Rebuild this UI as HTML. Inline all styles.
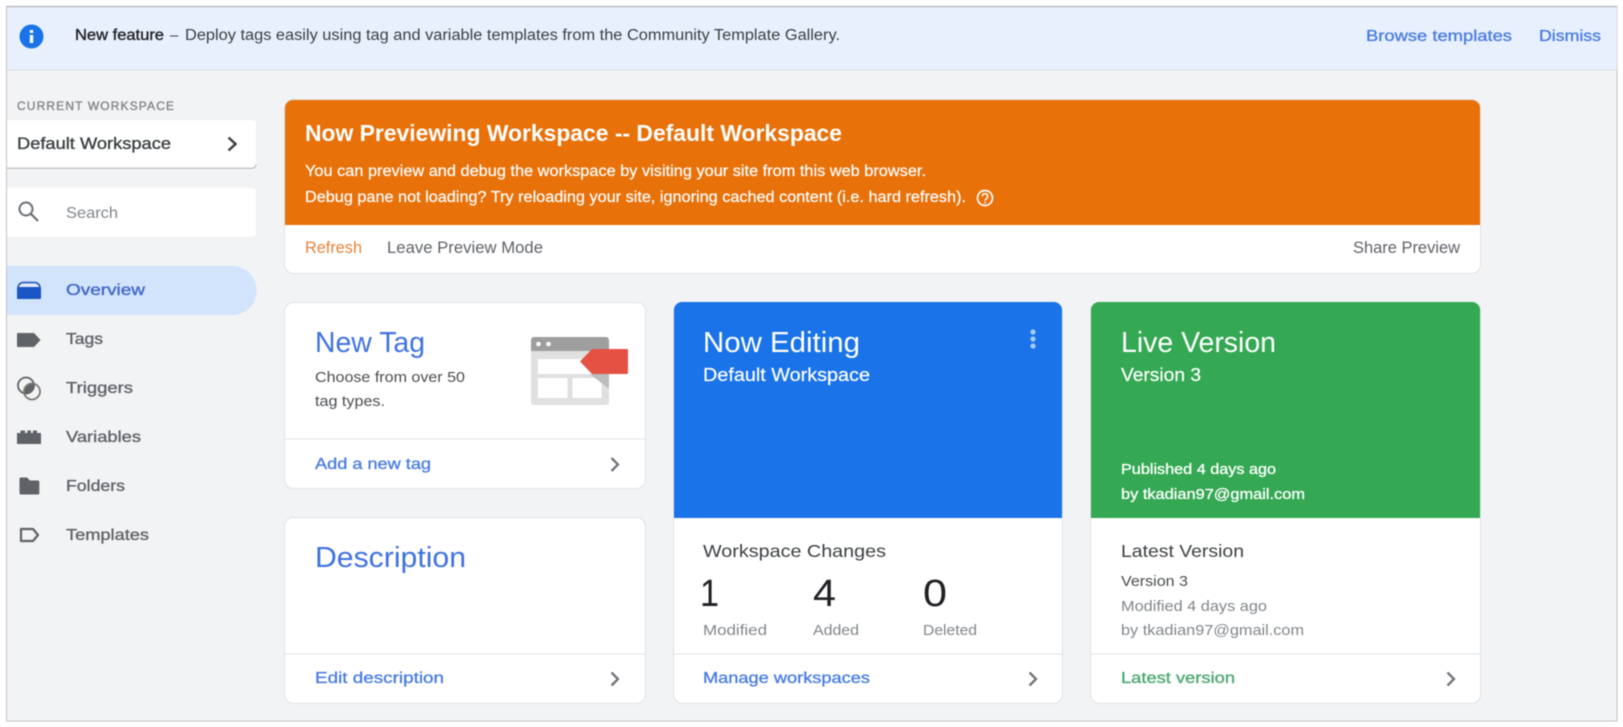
<!DOCTYPE html>
<html lang="en">
<head>
<meta charset="utf-8">
<title>Workspace Overview</title>
<style>
html,body{margin:0;padding:0;background:#fff;width:1623px;height:727px;overflow:hidden}
svg{display:block;filter:blur(.45px)}
text{font-family:"Liberation Sans",sans-serif;font-size:16px}
.m{stroke-width:.35px}
</style>
</head>
<body>
<svg xmlns="http://www.w3.org/2000/svg" width="1623" height="727" viewBox="0 0 1623 727">
<rect x="6.500" y="6.500" width="1610.500" height="714.500" fill="#f1f3f4" stroke="#c2c2c2" stroke-width="1"/>
<line x1="6" y1="6.500" x2="1617" y2="6.500" stroke="#a8a8a8"/>
<rect x="7" y="7" width="1610" height="63" fill="#e8f0fe"/>
<line x1="7" y1="70" x2="1617" y2="70" stroke="#dadce0"/>

<circle cx="31.500" cy="36.500" r="12" fill="#1a73e8"/>
<rect x="29.800" y="35" width="3.400" height="8" fill="#fff"/>
<rect x="29.800" y="30" width="3.400" height="3" fill="#fff"/>
<text x="75" y="40" textLength="89" lengthAdjust="spacingAndGlyphs" fill="#202124" stroke="#202124" class="m" style="font-size:15.500px">New feature</text>
<text x="170" y="40" style="font-size:15px" fill="#3c4043">–</text>
<text x="185" y="40" textLength="655" lengthAdjust="spacingAndGlyphs" style="font-size:15.500px" fill="#3c4043">Deploy tags easily using tag and variable templates from the Community Template Gallery.</text>
<text x="1366" y="41" textLength="146" lengthAdjust="spacingAndGlyphs" fill="#4a7de0" stroke="#4a7de0" class="m">Browse templates</text>
<text x="1539" y="41" textLength="62" lengthAdjust="spacingAndGlyphs" fill="#4a7de0" stroke="#4a7de0" class="m">Dismiss</text>

<text x="17" y="110" textLength="157" style="font-size:12px" fill="#80868b" stroke="#80868b" class="m">CURRENT WORKSPACE</text>
<path d="M7 120H252a4 4 0 0 1 4 4V164a4 4 0 0 1-4 4H7Z" fill="#fff"/>
<path d="M7 168.300H252a4 4 0 0 0 4-4" fill="none" stroke="#b0b0b0" stroke-width="1"/>
<text x="17" y="149" textLength="154" lengthAdjust="spacingAndGlyphs" style="font-size:17px" fill="#3c4043" stroke="#3c4043" class="m">Default Workspace</text>
<path d="M228.500 137.500L235.500 144L228.500 150.500" fill="none" stroke="#3c4043" stroke-width="2.500"/>

<path d="M7 188H252a4 4 0 0 1 4 4V233a4 4 0 0 1-4 4H7Z" fill="#fff"/>
<circle cx="26" cy="209" r="6.500" fill="none" stroke="#6b6f73" stroke-width="2"/>
<line x1="31" y1="214" x2="38" y2="221" stroke="#6b6f73" stroke-width="2.200"/>
<text x="66" y="218" textLength="52" lengthAdjust="spacingAndGlyphs" fill="#80868b">Search</text>

<path d="M7 266H232a24.500 24.500 0 0 1 0 49H7Z" fill="#d2e3fc"/>
<path d="M18 289V288a5.500 5.500 0 0 1 5.500-5.500H34.500a5.500 5.500 0 0 1 5.500 5.500V289Z" fill="#e3ebf8" stroke="#2f5fc2" stroke-width="1.700"/>
<rect x="17" y="287" width="24" height="12" rx="1" fill="#1a56c4"/>
<text x="66" y="295" textLength="79" lengthAdjust="spacingAndGlyphs" fill="#3f67c8" stroke="#3f67c8" class="m">Overview</text>

<path d="M18 333H34L40.500 340L34 347H18a1 1 0 0 1-1-1V334a1 1 0 0 1 1-1Z" fill="#5f6368"/>
<text x="66" y="344" textLength="37" lengthAdjust="spacingAndGlyphs" fill="#5f6368" stroke="#5f6368" class="m">Tags</text>

<path d="M33.800 383.700A8 8 0 0 1 24.200 393.300A8 8 0 0 1 33.800 383.700Z" fill="#5f6368"/>
<circle cx="26" cy="385.500" r="8" fill="none" stroke="#5f6368" stroke-width="1.800"/>
<circle cx="32" cy="391.500" r="8" fill="none" stroke="#7d7773" stroke-width="1.800"/>
<text x="66" y="393" textLength="67" lengthAdjust="spacingAndGlyphs" fill="#5f6368" stroke="#5f6368" class="m">Triggers</text>

<path d="M17 444V433H20.500V430.500H25V433H27.300V430.500H31V433H33V430.500H37V433H41V444Z" fill="#5f6368"/>
<text x="66" y="442" textLength="75" lengthAdjust="spacingAndGlyphs" fill="#5f6368" stroke="#5f6368" class="m">Variables</text>

<path d="M21 477.500H27L30 480.500H37.800a1.500 1.500 0 0 1 1.500 1.500V493a1.500 1.500 0 0 1-1.500 1.500H21a1.500 1.500 0 0 1-1.500-1.500V479a1.500 1.500 0 0 1 1.500-1.500Z" fill="#5f6368"/>
<text x="66" y="491" textLength="59" lengthAdjust="spacingAndGlyphs" fill="#5f6368" stroke="#5f6368" class="m">Folders</text>

<path d="M21 529H33L38 535L33 541H21Z" fill="none" stroke="#5f6368" stroke-width="2.200" stroke-linejoin="round"/>
<text x="66" y="540" textLength="83" lengthAdjust="spacingAndGlyphs" fill="#5f6368" stroke="#5f6368" class="m">Templates</text>

<!-- Preview card -->
<rect x="284.500" y="99.500" width="1196" height="174" rx="9" fill="#fff" stroke="#e0e2e4"/>
<path d="M285 225V108a8 8 0 0 1 8-8H1472a8 8 0 0 1 8 8V225Z" fill="#e8710a"/>
<text x="305" y="141" textLength="537" lengthAdjust="spacingAndGlyphs" style="font-size:23.500px;font-weight:bold" fill="#fff">Now Previewing Workspace -- Default Workspace</text>
<text x="305" y="176" textLength="621" lengthAdjust="spacingAndGlyphs" style="font-size:15.500px" fill="#fff" stroke="#fff" stroke-width=".2">You can preview and debug the workspace by visiting your site from this web browser.</text>
<text x="305" y="202" textLength="661" lengthAdjust="spacingAndGlyphs" style="font-size:15.500px" fill="#fff" stroke="#fff" stroke-width=".2">Debug pane not loading? Try reloading your site, ignoring cached content (i.e. hard refresh).</text>
<circle cx="985" cy="198" r="7.500" fill="none" stroke="#fff" stroke-width="1.700"/>
<path d="M982.300 196.300a2.700 2.700 0 1 1 4.300 2.200c-1 .8-1.600 1.200-1.600 2.200" fill="none" stroke="#fff" stroke-width="1.500"/>
<circle cx="985" cy="202.700" r=".9" fill="#fff"/>
<text x="305" y="253" textLength="57" lengthAdjust="spacingAndGlyphs" style="font-size:16.500px" fill="#e8823a">Refresh</text>
<text x="387" y="253" textLength="156" lengthAdjust="spacingAndGlyphs" style="font-size:16.500px" fill="#5f6368">Leave Preview Mode</text>
<text x="1353" y="253" textLength="107" lengthAdjust="spacingAndGlyphs" style="font-size:16.500px" fill="#5f6368">Share Preview</text>

<!-- New Tag card -->
<rect x="284.500" y="302.500" width="361" height="186" rx="9" fill="#fff" stroke="#e0e2e4"/>
<text x="315" y="352" textLength="110" lengthAdjust="spacingAndGlyphs" style="font-size:29px" fill="#3f72e0">New Tag</text>
<text x="315" y="382" textLength="150" lengthAdjust="spacingAndGlyphs" style="font-size:15px" fill="#4a4d50">Choose from over 50</text>
<text x="315" y="406" textLength="70" lengthAdjust="spacingAndGlyphs" style="font-size:15px" fill="#4a4d50">tag types.</text>
<path d="M531 351V340a3 3 0 0 1 3-3H606a3 3 0 0 1 3 3V351Z" fill="#9e9e9e"/>
<path d="M531 351H609V402a3 3 0 0 1-3 3H534a3 3 0 0 1-3-3Z" fill="#e0e0e0"/>
<circle cx="538.500" cy="344" r="2.300" fill="#fff"/>
<circle cx="548.500" cy="344" r="2.300" fill="#fff"/>
<rect x="538" y="359" width="64" height="15" fill="#fff"/>
<rect x="538" y="378" width="29.500" height="20" fill="#fff"/>
<rect x="572.500" y="378" width="29" height="20" fill="#fff"/>
<path d="M590 374H609V389Z" fill="#bdbdbd"/>
<path d="M580 361.500L592 349H627a1 1 0 0 1 1 1V373a1 1 0 0 1-1 1H592Z" fill="#e55244"/>
<line x1="285" y1="439" x2="645" y2="439" stroke="#dfe1e3"/>
<text x="315" y="469" textLength="116" lengthAdjust="spacingAndGlyphs" fill="#4a7de0" stroke="#4a7de0" class="m">Add a new tag</text>
<path d="M611.500 458L618 464.500L611.500 471" fill="none" stroke="#70757a" stroke-width="2.300"/>

<!-- Description card -->
<rect x="284.500" y="517.500" width="361" height="186" rx="9" fill="#fff" stroke="#e0e2e4"/>
<text x="315" y="567" textLength="151" lengthAdjust="spacingAndGlyphs" style="font-size:29px" fill="#3f72e0">Description</text>
<line x1="285" y1="654" x2="645" y2="654" stroke="#dfe1e3"/>
<text x="315" y="683" textLength="129" lengthAdjust="spacingAndGlyphs" fill="#4a7de0" stroke="#4a7de0" class="m">Edit description</text>
<path d="M611.500 672.500L618 679L611.500 685.500" fill="none" stroke="#70757a" stroke-width="2.300"/>

<!-- Now Editing card -->
<rect x="673.500" y="302.500" width="389" height="401" rx="9" fill="#fff" stroke="#e0e2e4"/>
<path d="M674 518V310a8 8 0 0 1 8-8H1054a8 8 0 0 1 8 8V518Z" fill="#1a73e8"/>
<text x="703" y="352" textLength="157" lengthAdjust="spacingAndGlyphs" style="font-size:29px" fill="#fff">Now Editing</text>
<text x="703" y="381" textLength="167" lengthAdjust="spacingAndGlyphs" style="font-size:18px" fill="#fff" stroke="#fff" stroke-width=".2">Default Workspace</text>
<circle cx="1033" cy="332" r="2.600" fill="#a6cbfb"/>
<circle cx="1033" cy="339" r="2.600" fill="#a6cbfb"/>
<circle cx="1033" cy="346" r="2.600" fill="#a6cbfb"/>
<text x="703" y="557" textLength="183" lengthAdjust="spacingAndGlyphs" style="font-size:17.500px" fill="#3c4043">Workspace Changes</text>
<text x="700" y="606" textLength="19" lengthAdjust="spacingAndGlyphs" style="font-size:38px" fill="#202124">1</text>
<text x="813" y="606" textLength="23" lengthAdjust="spacingAndGlyphs" style="font-size:38px" fill="#202124">4</text>
<text x="923" y="606" textLength="24" lengthAdjust="spacingAndGlyphs" style="font-size:38px" fill="#202124">0</text>
<text x="703" y="635" textLength="64" lengthAdjust="spacingAndGlyphs" style="font-size:15px" fill="#80868b">Modified</text>
<text x="813" y="635" textLength="46" lengthAdjust="spacingAndGlyphs" style="font-size:15px" fill="#80868b">Added</text>
<text x="923" y="635" textLength="54" lengthAdjust="spacingAndGlyphs" style="font-size:15px" fill="#80868b">Deleted</text>
<line x1="673" y1="654" x2="1062" y2="654" stroke="#dfe1e3"/>
<text x="703" y="683" textLength="167" lengthAdjust="spacingAndGlyphs" fill="#4a7de0" stroke="#4a7de0" class="m">Manage workspaces</text>
<path d="M1029.500 672.500L1036 679L1029.500 685.500" fill="none" stroke="#70757a" stroke-width="2.300"/>

<!-- Live Version card -->
<rect x="1090.500" y="302.500" width="390" height="401" rx="9" fill="#fff" stroke="#e0e2e4"/>
<path d="M1091 518V310a8 8 0 0 1 8-8H1472a8 8 0 0 1 8 8V518Z" fill="#34a853"/>
<text x="1121" y="352" textLength="155" lengthAdjust="spacingAndGlyphs" style="font-size:29px" fill="#fff">Live Version</text>
<text x="1121" y="381" textLength="80" lengthAdjust="spacingAndGlyphs" style="font-size:18px" fill="#fff" stroke="#fff" stroke-width=".2">Version 3</text>
<text x="1121" y="474" textLength="155" lengthAdjust="spacingAndGlyphs" style="font-size:15px" fill="#fff" stroke="#fff" stroke-width=".3">Published 4 days ago</text>
<text x="1121" y="499" textLength="184" lengthAdjust="spacingAndGlyphs" style="font-size:15px" fill="#fff" stroke="#fff" stroke-width=".3">by tkadian97@gmail.com</text>
<text x="1121" y="557" textLength="123" lengthAdjust="spacingAndGlyphs" style="font-size:17.500px" fill="#3c4043">Latest Version</text>
<text x="1121" y="586" textLength="67" lengthAdjust="spacingAndGlyphs" style="font-size:15px" fill="#4a4d50">Version 3</text>
<text x="1121" y="611" textLength="146" lengthAdjust="spacingAndGlyphs" style="font-size:15px" fill="#80868b">Modified 4 days ago</text>
<text x="1121" y="635" textLength="183" lengthAdjust="spacingAndGlyphs" style="font-size:15px" fill="#80868b">by tkadian97@gmail.com</text>
<line x1="1091" y1="654" x2="1480" y2="654" stroke="#dfe1e3"/>
<text x="1121" y="683" textLength="114" lengthAdjust="spacingAndGlyphs" fill="#4ca86f" stroke="#4ca86f" class="m">Latest version</text>
<path d="M1447.500 672.500L1454 679L1447.500 685.500" fill="none" stroke="#70757a" stroke-width="2.300"/>
</svg>
</body>
</html>
